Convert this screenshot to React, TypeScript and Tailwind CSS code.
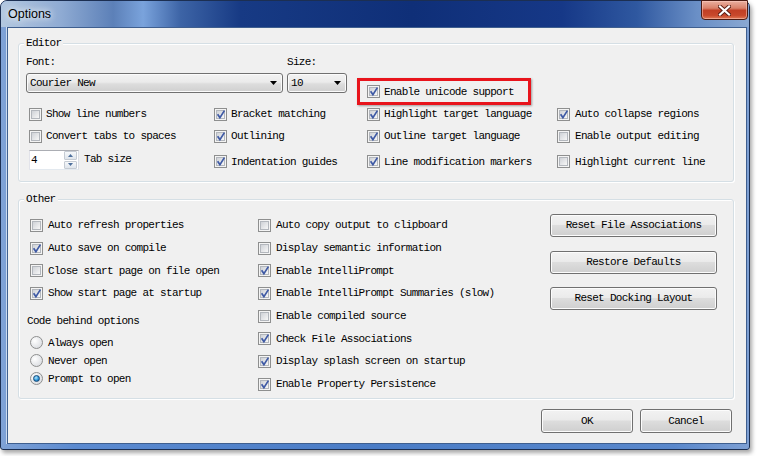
import React from "react";

const mono = "font-['Liberation_Mono',monospace] text-[11px] tracking-[-0.7px] text-black";

const Box: React.FC<{ on?: boolean }> = ({ on }) => (
  <span className="relative h-[13px] w-[13px] shrink-0 border border-[#8e8f8f] bg-[#f4f4f4] p-[1px]">
    <span className="block h-full w-full border border-[#b3b7bd] bg-[linear-gradient(135deg,#cfd2d7,#f7f7f7)]" />
    {on && (
      <svg className="absolute left-0 top-0" width="11" height="11" viewBox="0 0 11 11">
        <path d="M2.6 5.2 L4.9 8.6 L9.4 1.6" fill="none" stroke="#3f5aa5" strokeWidth="1.7" />
      </svg>
    )}
  </span>
);

const Radio: React.FC<{ on?: boolean }> = ({ on }) => (
  <span className="flex h-[13px] w-[13px] shrink-0 items-center justify-center rounded-full border border-[#8e8f8f] bg-[radial-gradient(circle_at_35%_35%,#ffffff,#d2d5da)]">
    {on && (
      <span className="h-[7px] w-[7px] rounded-full border border-[#174a78] bg-[radial-gradient(circle_at_40%_35%,#b4e8ff,#2b95d8_55%,#0e4f8a)]" />
    )}
  </span>
);

const Check: React.FC<{ on?: boolean; label: string; gap?: string }> = ({ on, label, gap = "gap-[4px]" }) => (
  <div className={`flex items-center ${gap}`}>
    <Box on={on} />
    <span className="whitespace-nowrap leading-[12px]">{label}</span>
  </div>
);

const Arrow = () => (
  <svg width="7" height="4" viewBox="0 0 7 4">
    <path d="M0 0 H7 L3.5 4 Z" fill="#000" />
  </svg>
);

const Combo: React.FC<{ value: string; className: string }> = ({ value, className }) => (
  <div
    className={`flex h-[20px] items-center justify-between rounded-[3px] border border-[#707070] bg-[linear-gradient(#f2f2f2,#ebebeb_45%,#dddddd_55%,#cfcfcf)] pl-[3px] pr-[5px] shadow-[inset_0_0_0_1px_#fbfbfb] ${className}`}
  >
    <span>{value}</span>
    <Arrow />
  </div>
);

const Btn: React.FC<{ children: React.ReactNode; className: string }> = ({ children, className }) => (
  <button
    className={`flex items-center justify-center rounded-[3px] border border-[#707070] bg-[linear-gradient(#f2f2f2,#ebebeb_45%,#dddddd_50%,#cfcfcf)] shadow-[inset_0_0_0_1px_#fcfcfc] ${mono} ${className}`}
  >
    {children}
  </button>
);

const Spinner = () => (
  <div className="flex h-[20px] w-[50px] items-center border border-[#abadb3] border-b-[#e3e9ef] border-l-[#e2e3ea] border-r-[#dbdfe6] bg-white pr-[1px]">
    <span className="flex-1 pl-[1px] leading-[12px]">4</span>
    <div className="flex h-[18px] w-[13px] flex-col gap-[1px]">
      <span className="flex flex-1 items-center justify-center rounded-[1px] border border-[#c5cbd3] bg-[linear-gradient(#f6f8fa,#dfe5ec)]">
        <svg width="5" height="3" viewBox="0 0 5 3"><path d="M0 3 L2.5 0 L5 3 Z" fill="#4d6f9c" /></svg>
      </span>
      <span className="flex flex-1 items-center justify-center rounded-[1px] border border-[#c5cbd3] bg-[linear-gradient(#f6f8fa,#dfe5ec)]">
        <svg width="5" height="3" viewBox="0 0 5 3"><path d="M0 0 H5 L2.5 3 Z" fill="#4d6f9c" /></svg>
      </span>
    </div>
  </div>
);

const Group: React.FC<{ title: string; className: string; children: React.ReactNode }> = ({ title, className, children }) => (
  <div className={`relative rounded-[3px] border border-[#d5dfe5] shadow-[inset_1px_1px_0_#ffffff,1px_1px_0_#ffffff] ${className}`}>
    <span className="absolute -top-[8px] left-[5px] bg-[#f0f0f0] px-[2px] leading-[14px]">{title}</span>
    {children}
  </div>
);

export default function App() {
  return (
    <div className="h-[456px] w-[757px] overflow-hidden bg-white">
      <div className="flex h-[450px] w-[750px] flex-col rounded-t-[7px] rounded-b-[3px] border border-[#1c2f52] bg-[linear-gradient(90deg,#7fa2d6_0%,#5b8ad0_10%,#4a7cc6_50%,#5a88cc_90%,#7ea0d4_100%)] shadow-[2px_3px_4px_rgba(0,0,0,0.35)]">
        <div className="flex h-[26px] shrink-0 items-start justify-between rounded-t-[6px] bg-[linear-gradient(90deg,#b3c8e0_0%,#8fabd3_8%,#5c80b8_15%,#7aa3dc_19%,#3d64a6_24%,#173a84_32%,#0f2f78_55%,#163887_75%,#2f58a0_85%,#6a8fc6_93%,#8aa8d2_100%)]">
          <span className="mt-[5px] pl-[7px] font-['Liberation_Sans',sans-serif] text-[12.5px] leading-[16px] text-black [text-shadow:0_0_6px_#ffffff,0_0_10px_rgba(255,255,255,0.8)]">
            Options
          </span>
          <div className="mr-[1px] -mt-[1px] flex h-[20px] w-[47px] items-center justify-center rounded-b-[4px] border border-[#4b1b12] bg-[linear-gradient(#eab0a0_0%,#d98069_40%,#c13f25_52%,#c8482c_80%,#e07a55_100%)] shadow-[inset_0_0_0_1px_rgba(255,210,200,0.5)]">
            <svg width="13" height="11" viewBox="0 0 13 11">
              <path d="M2 1.5 L11 9.5 M11 1.5 L2 9.5" stroke="#5a1e14" strokeWidth="4" strokeLinecap="square" />
              <path d="M2 1.5 L11 9.5 M11 1.5 L2 9.5" stroke="#ffffff" strokeWidth="2.2" strokeLinecap="square" />
            </svg>
          </div>
        </div>

        <div className={`ml-[6px] h-[417px] w-[740px] border border-[#3f5f8f] bg-[#f0f0f0] shadow-[-1px_0_0_#c9daf0] pl-[10px] pt-[15px] ${mono}`}>
          <Group title="Editor" className="h-[139px] w-[716px]">
            <div className="flex flex-col pl-[7px] pt-[12px]">
              <div className="flex h-[12px] items-center leading-[12px]">
                <span className="w-[261px]">Font:</span>
                <span>Size:</span>
              </div>
              <div className="mt-[5px] flex h-[20px] items-start">
                <Combo value="Courier New" className="w-[257px]" />
                <Combo value="10" className="ml-[4px] w-[60px]" />
                <div className="ml-[10px] mt-[5px] flex h-[27px] w-[174px] shrink-0 items-center gap-[4px] border-[3px] border-[#e8141c] pl-[7px] shadow-[1px_1px_2px_rgba(0,0,0,0.35)]">
                  <Box on />
                  <span className="whitespace-nowrap leading-[12px]">Enable unicode support</span>
                </div>
              </div>
              <div className="mt-[10px] grid grid-cols-[185px_153px_190px_1fr] grid-rows-[22px_22px_26px] items-center pl-[3px]">
                <Check label="Show line numbers" />
                <Check on label="Bracket matching" />
                <Check on label="Highlight target language" />
                <Check on label="Auto collapse regions" gap="gap-[5px]" />
                <Check label="Convert tabs to spaces" />
                <Check on label="Outlining" />
                <Check on label="Outline target language" />
                <Check label="Enable output editing" gap="gap-[5px]" />
                <div className="flex items-center gap-[5px]">
                  <Spinner />
                  <span className="-mt-[3px] leading-[12px]">Tab size</span>
                </div>
                <div className="mt-[3px]"><Check on label="Indentation guides" /></div>
                <div className="mt-[3px]"><Check on label="Line modification markers" /></div>
                <div className="mt-[3px]"><Check label="Highlight current line" gap="gap-[5px]" /></div>
              </div>
            </div>
          </Group>

          <Group title="Other" className="mt-[17px] h-[200px] w-[716px]">
            <div className="flex pt-[14px]">
              <div className="flex w-[239px] flex-col pl-[11px]">
                {[
                  ["Auto refresh properties", false],
                  ["Auto save on compile", true],
                  ["Close start page on file open", false],
                  ["Show start page at startup", true],
                ].map(([label, on]) => (
                  <div key={label as string} className="flex h-[22.7px] items-center">
                    <Check on={on as boolean} label={label as string} gap="gap-[5px]" />
                  </div>
                ))}
                <div className="-ml-[3px] mt-[5px] flex h-[22px] items-center leading-[12px]">Code behind options</div>
                <div className="flex flex-col pt-[2px]">
                  {[
                    ["Always open", false],
                    ["Never open", false],
                    ["Prompt to open", true],
                  ].map(([label, on]) => (
                    <div key={label as string} className="flex h-[18px] items-center gap-[5px]">
                      <Radio on={on as boolean} />
                      <span className="leading-[12px]">{label as string}</span>
                    </div>
                  ))}
                </div>
              </div>

              <div className="flex w-[292px] flex-col">
                {[
                  ["Auto copy output to clipboard", false],
                  ["Display semantic information", false],
                  ["Enable IntelliPrompt", true],
                  ["Enable IntelliPrompt Summaries (slow)", true],
                  ["Enable compiled source", false],
                  ["Check File Associations", true],
                  ["Display splash screen on startup", true],
                  ["Enable Property Persistence", true],
                ].map(([label, on]) => (
                  <div key={label as string} className="flex h-[22.7px] items-center">
                    <Check on={on as boolean} label={label as string} gap="gap-[5px]" />
                  </div>
                ))}
              </div>

              <div className="flex flex-col gap-[13.5px] pt-[-1px]">
                <Btn className="h-[23px] w-[167px]">Reset File Associations</Btn>
                <Btn className="h-[23px] w-[167px]">Restore Defaults</Btn>
                <Btn className="h-[23px] w-[167px]">Reset Docking Layout</Btn>
              </div>
            </div>
          </Group>

          <div className="mt-[10px] flex w-[716px] justify-end gap-[7px] pr-[2px]">
            <Btn className="h-[24px] w-[92px]">OK</Btn>
            <Btn className="h-[24px] w-[92px]">Cancel</Btn>
          </div>
        </div>
      </div>
    </div>
  );
}
